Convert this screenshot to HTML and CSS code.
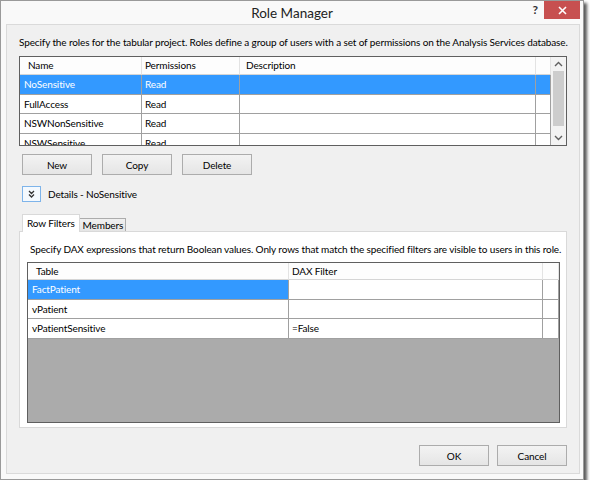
FILE: index.html
```html
<!DOCTYPE html>
<html lang="en">

<head>
    <meta charset="UTF-8">
    <meta name="viewport" content="width=device-width, initial-scale=1.0">
    <title>Role Manager</title>
    <link rel="stylesheet" href="styles.css">
</head>

<body>
    <div class="window">
        <div class="titlebar">
            <span></span>
            <span class="title">Role Manager</span>
            <div class="title-buttons">
                <span class="help">?</span>
                <span class="close">
                    <svg width="9" height="9" viewBox="0 0 9 9"><path d="M1 1L8 8M8 1L1 8" stroke="#fff" stroke-width="1.6" /></svg>
                </span>
            </div>
        </div>

        <div class="client">
            <p class="intro">Specify the roles for the tabular project. Roles define a group of users with a set of permissions on the Analysis Services database.</p>

            <div class="grid roles">
                <div class="grid-body">
                    <div class="row head">
                        <div class="cell">Name</div>
                        <div class="cell">Permissions</div>
                        <div class="cell">Description</div>
                        <div class="cell"></div>
                    </div>
                    <div class="row selected">
                        <div class="cell">NoSensitive</div>
                        <div class="cell">Read</div>
                        <div class="cell"></div>
                        <div class="cell"></div>
                    </div>
                    <div class="row">
                        <div class="cell">FullAccess</div>
                        <div class="cell">Read</div>
                        <div class="cell"></div>
                        <div class="cell"></div>
                    </div>
                    <div class="row">
                        <div class="cell">NSWNonSensitive</div>
                        <div class="cell">Read</div>
                        <div class="cell"></div>
                        <div class="cell"></div>
                    </div>
                    <div class="row">
                        <div class="cell">NSWSensitive</div>
                        <div class="cell">Read</div>
                        <div class="cell"></div>
                        <div class="cell"></div>
                    </div>
                </div>
                <div class="vscroll">
                    <svg class="arrow" width="9" height="6" viewBox="0 0 9 6"><path d="M1 5L4.5 1.5L8 5" fill="none" stroke="#606060" stroke-width="1.4" /></svg>
                    <div class="thumb"></div>
                    <svg class="arrow" width="9" height="6" viewBox="0 0 9 6"><path d="M1 1L4.5 4.5L8 1" fill="none" stroke="#606060" stroke-width="1.4" /></svg>
                </div>
            </div>

            <div class="actions">
                <button class="btn">New</button>
                <button class="btn">Copy</button>
                <button class="btn">Delete</button>
            </div>

            <div class="details">
                <button class="expander">
                    <svg width="7" height="8" viewBox="0 0 7 8"><path d="M1 1L3.5 3.5L6 1M1 4.5L3.5 7L6 4.5" fill="none" stroke="#333" stroke-width="1.3" /></svg>
                </button>
                <span>Details - NoSensitive</span>
            </div>

            <div class="tabs">
                <span class="tab active">Row Filters</span>
                <span class="tab">Members</span>
            </div>
            <div class="tab-panel">
                <p class="hint">Specify DAX expressions that return Boolean values. Only rows that match the specified filters are visible to users in this role.</p>
                <div class="grid filters">
                    <div class="row head">
                        <div class="cell">Table</div>
                        <div class="cell">DAX Filter</div>
                        <div class="cell"></div>
                    </div>
                    <div class="row picked">
                        <div class="cell">FactPatient</div>
                        <div class="cell"></div>
                        <div class="cell"></div>
                    </div>
                    <div class="row">
                        <div class="cell">vPatient</div>
                        <div class="cell"></div>
                        <div class="cell"></div>
                    </div>
                    <div class="row">
                        <div class="cell">vPatientSensitive</div>
                        <div class="cell">=False</div>
                        <div class="cell"></div>
                    </div>
                    <div class="empty-area"></div>
                </div>
            </div>

            <div class="footer">
                <button class="btn">OK</button>
                <button class="btn">Cancel</button>
            </div>
        </div>
    </div>
</body>

</html>
```

FILE: styles.css
```css
* {
    box-sizing: border-box;
}

body {
    margin: 0;
    background-color: #ffffff;
    font-family: "Lato", "Open Sans", sans-serif;
    font-size: 10px;
    letter-spacing: -0.12px;
    color: #000000;
}

.window {
    width: 584px;
    height: 480px;
    border: 1px solid #9a9a9a;
    background-color: #f9f9f9;
    box-shadow: 3px 3px 3px rgba(0, 0, 0, 0.65);
}

.titlebar {
    height: 23px;
    display: grid;
    grid-template-columns: 1fr auto 1fr;
}

.title {
    font-size: 13.5px;
    letter-spacing: 0;
    line-height: 24px;
    color: #222222;
}

.title-buttons {
    display: flex;
    justify-content: flex-end;
    align-items: flex-start;
    margin-right: 3px;
}

.help {
    font-weight: bold;
    font-size: 12px;
    line-height: 18px;
    margin-right: 6px;
    color: #333333;
}

.close {
    width: 36px;
    height: 18px;
    background-color: #c75050;
    display: flex;
    align-items: center;
    justify-content: center;
}

.client {
    width: 574px;
    height: 450px;
    margin-left: 5px;
    border: 1px solid #dadada;
    background-color: #f0f0f0;
    padding: 0 12px;
}

.intro {
    margin: 9px 0 6px 0;
    line-height: 16px;
    white-space: nowrap;
}

.grid {
    border: 1px solid #5f5f5f;
    background-color: #ffffff;
}

.roles {
    height: 90px;
    display: flex;
}

.grid-body {
    flex: 1;
    overflow: hidden;
}

.row {
    display: grid;
    height: 19.5px;
}

.roles .row {
    grid-template-columns: 122px 98px 296px 15px;
}

.filters .row {
    grid-template-columns: 261px 254px 16px;
    height: 19.6px;
}

.cell {
    border-right: 1px solid #a0a0a0;
    border-bottom: 1px solid #a0a0a0;
    padding-left: 4px;
    line-height: 18px;
    white-space: nowrap;
    overflow: hidden;
}

.row .cell:nth-child(2) {
    padding-left: 3px;
}

.row.head {
    height: 18px;
}

.filters .row.head {
    height: 17px;
}

.head .cell {
    border-right: 1px solid #e3e3e3;
    border-bottom: 1px solid #d5d5d5;
    padding-left: 6px;
    line-height: 17px;
    background-color: #fdfdfd;
}

.head .cell:first-child {
    padding-left: 8px;
}

.filters .head .cell {
    line-height: 16px;
}

.selected .cell,
.picked .cell:first-child {
    background-color: #3399ff;
    color: #ffffff;
}

.vscroll {
    width: 15px;
    background-color: #f3f3f3;
    display: flex;
    flex-direction: column;
    align-items: center;
    padding-top: 4px;
}

.vscroll .arrow {
    flex-shrink: 0;
}

.thumb {
    width: 11px;
    height: 55px;
    margin: 4px 0 9px 0;
    background-color: #cdcdcd;
}

.actions {
    display: flex;
    gap: 10px;
    margin: 8px 0 0 3px;
}

.btn {
    width: 70px;
    height: 21px;
    padding: 0;
    border: 1px solid #acacac;
    background: linear-gradient(#f3f3f3, #e5e5e5);
    font-family: inherit;
    font-size: 10px;
    letter-spacing: inherit;
    color: #000000;
}

.details {
    display: flex;
    align-items: center;
    margin: 11px 0 0 3px;
    height: 16px;
}

.expander {
    width: 19px;
    height: 16px;
    padding: 0;
    border: 1px solid #7eb4ea;
    background-color: #f4f9fe;
    display: flex;
    align-items: center;
    justify-content: center;
    margin-right: 7px;
}

.tabs {
    display: flex;
    align-items: flex-end;
    margin: 12px 0 0 3px;
    height: 17px;
}

.tab {
    height: 13px;
    padding: 0 2px 0 3px;
    border: 1px solid #acacac;
    border-bottom: none;
    background: linear-gradient(#f0f0f0, #e5e5e5);
    line-height: 12px;
    margin-left: -1px;
}

.tab.active {
    height: 18px;
    margin-left: 0;
    margin-bottom: -1px;
    padding: 0 4px 0 4px;
    border-color: #d9d9d9;
    background: #ffffff;
    line-height: 16px;
    position: relative;
    z-index: 1;
}

.tab-panel {
    height: 197px;
    border: 1px solid #d9d9d9;
    background-color: #ffffff;
    padding: 9px 6px 4px 7px;
}

.hint {
    margin: 0 0 5px 3px;
    line-height: 16px;
    white-space: nowrap;
}

.filters {
    height: 161px;
    display: flex;
    flex-direction: column;
}

.empty-area {
    flex: 1;
    background-color: #ababab;
}

.footer {
    display: flex;
    justify-content: flex-end;
    gap: 8px;
    margin-top: 17px;
}
```
